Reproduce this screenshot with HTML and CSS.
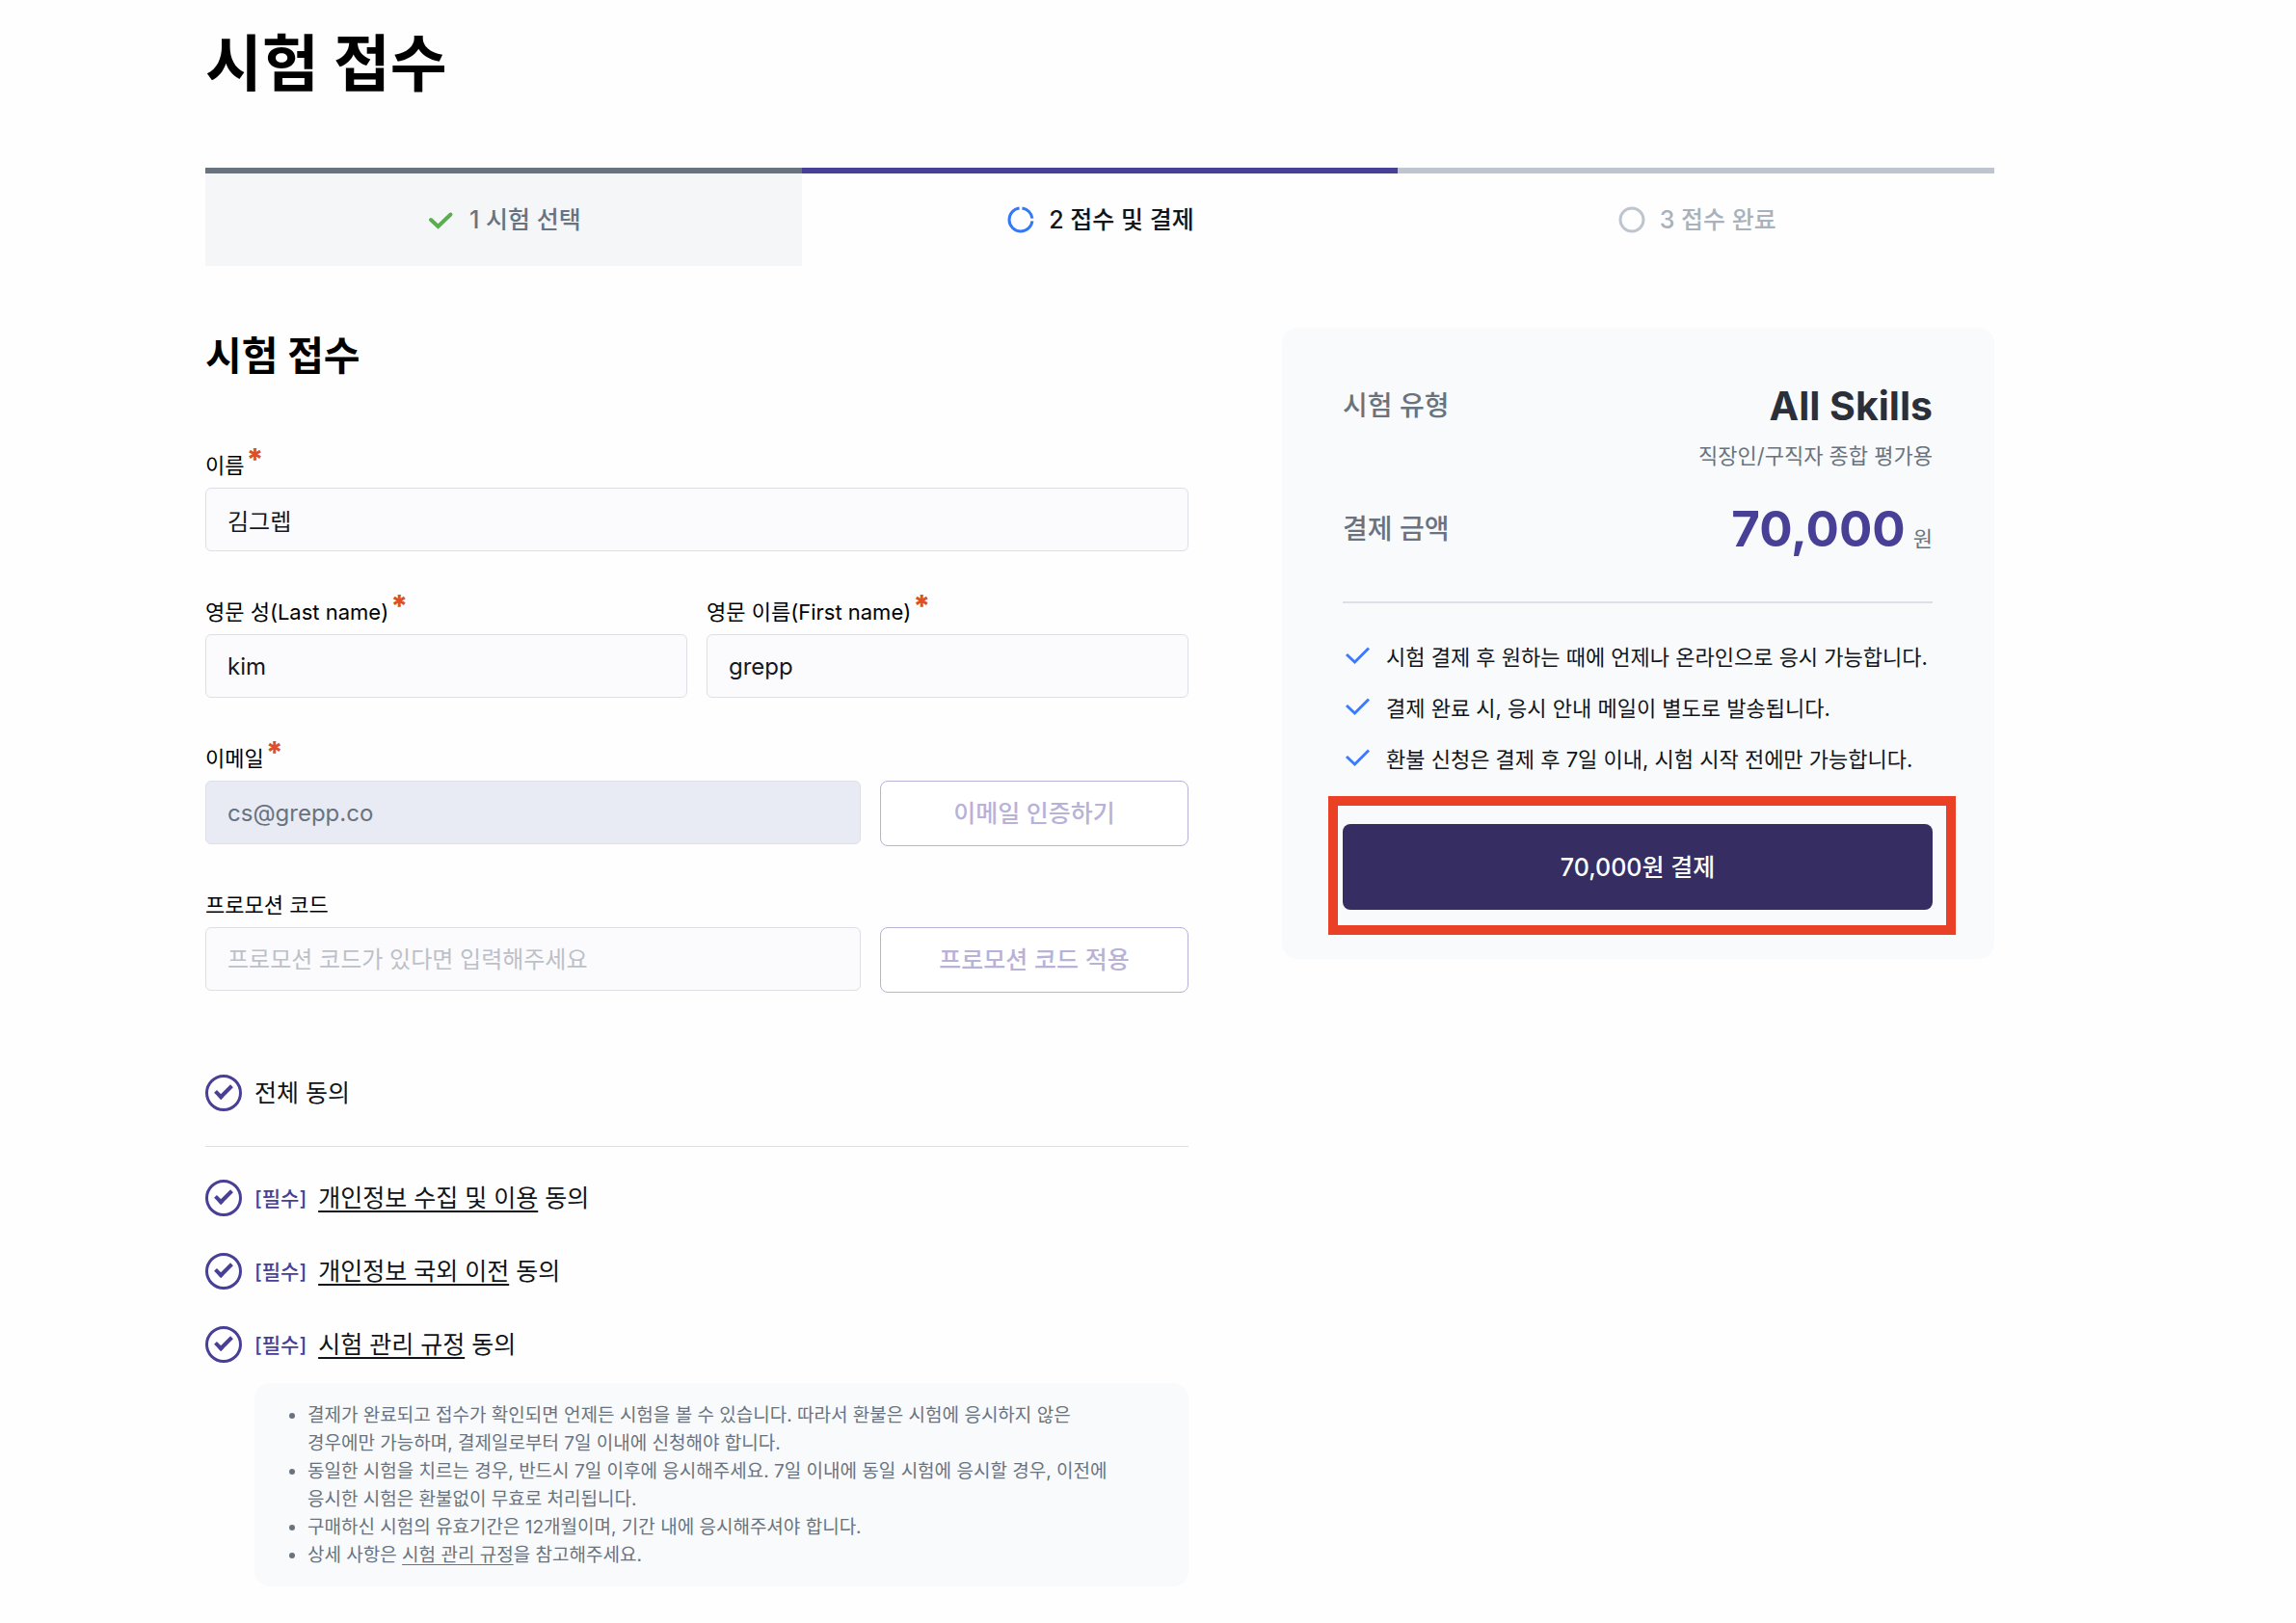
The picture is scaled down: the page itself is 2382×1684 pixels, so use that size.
FILE: index.html
```html
<!DOCTYPE html>
<html lang="ko">

<head>
    <meta charset="UTF-8">
    <meta name="viewport" content="width=device-width, initial-scale=1.0">
    <title>시험 접수</title>
    <link rel="stylesheet" href="styles.css">
</head>

<body>
    <div class="page">
        <h1>시험 접수</h1>

        <ol class="steps">
            <li class="step done">
                <svg class="step-icon" viewBox="0 0 32 32"><path d="M5 16l7.500 7L25.500 10.500" fill="none" stroke="#5aae4c" stroke-width="4" stroke-linecap="round" /></svg>
                <span>1 시험 선택</span>
            </li>
            <li class="step current">
                <svg class="step-icon" viewBox="0 0 32 32"><circle cx="16" cy="16" r="12" fill="none" stroke="#3478f6" stroke-width="3" pathLength="100" stroke-dasharray="71 4 21 4" stroke-dashoffset="-2" /></svg>
                <span>2 접수 및 결제</span>
            </li>
            <li class="step">
                <svg class="step-icon" viewBox="0 0 32 32"><circle cx="16" cy="16" r="12" fill="none" stroke="#bfc5ce" stroke-width="3" /></svg>
                <span>3 접수 완료</span>
            </li>
        </ol>

        <main class="content">
            <form class="form">
                <h2>시험 접수</h2>

                <div class="row">
                    <div class="field">
                        <label for="name">이름<span class="required">*</span></label>
                        <input id="name" type="text" value="김그렙">
                    </div>
                </div>

                <div class="row">
                    <div class="field">
                        <label for="last-name">영문 성(Last name)<span class="required">*</span></label>
                        <input id="last-name" type="text" value="kim">
                    </div>
                    <div class="field">
                        <label for="first-name">영문 이름(First name)<span class="required">*</span></label>
                        <input id="first-name" type="text" value="grepp">
                    </div>
                </div>

                <div class="row">
                    <div class="field">
                        <label for="email">이메일<span class="required">*</span></label>
                        <input id="email" type="email" value="cs@grepp.co" disabled>
                    </div>
                    <button class="sub-button" type="button" disabled>이메일 인증하기</button>
                </div>

                <div class="row">
                    <div class="field">
                        <label for="promotion">프로모션 코드</label>
                        <input id="promotion" type="text" placeholder="프로모션 코드가 있다면 입력해주세요">
                    </div>
                    <button class="sub-button" type="button" disabled>프로모션 코드 적용</button>
                </div>

                <div class="agree agree-all">
                    <input id="agree-all" type="checkbox" checked>
                    <label for="agree-all">전체 동의</label>
                </div>

                <div class="agree-list">
                    <div class="agree">
                        <input id="agree-privacy" type="checkbox" checked>
                        <label for="agree-privacy"><span class="must">[필수]</span><a href="#privacy">개인정보 수집 및 이용</a> 동의</label>
                    </div>
                    <div class="agree">
                        <input id="agree-overseas" type="checkbox" checked>
                        <label for="agree-overseas"><span class="must">[필수]</span><a href="#overseas">개인정보 국외 이전</a> 동의</label>
                    </div>
                    <div class="agree">
                        <input id="agree-rules" type="checkbox" checked>
                        <label for="agree-rules"><span class="must">[필수]</span><a href="#rules">시험 관리 규정</a> 동의</label>
                    </div>
                </div>

                <ul class="notice">
                    <li>결제가 완료되고 접수가 확인되면 언제든 시험을 볼 수 있습니다. 따라서 환불은 시험에 응시하지 않은 경우에만 가능하며, 결제일로부터 7일 이내에 신청해야 합니다.</li>
                    <li>동일한 시험을 치르는 경우, 반드시 7일 이후에 응시해주세요. 7일 이내에 동일 시험에 응시할 경우, 이전에 응시한 시험은 환불없이 무효로 처리됩니다.</li>
                    <li>구매하신 시험의 유효기간은 12개월이며, 기간 내에 응시해주셔야 합니다.</li>
                    <li>상세 사항은 <a href="#rules">시험 관리 규정</a>을 참고해주세요.</li>
                </ul>
            </form>

            <aside class="summary">
                <dl>
                    <div class="summary-row">
                        <dt>시험 유형</dt>
                        <dd>
                            <strong class="exam">All Skills</strong>
                            <span class="exam-desc">직장인/구직자 종합 평가용</span>
                        </dd>
                    </div>
                    <div class="summary-row">
                        <dt>결제 금액</dt>
                        <dd class="amount"><strong class="price">70,000</strong><span class="won">원</span></dd>
                    </div>
                </dl>

                <ul class="info">
                    <li><svg class="info-icon" viewBox="0 0 32 32"><path d="M4 15l8.500 8L27 8.500" fill="none" stroke="#3b7cff" stroke-width="3" /></svg>시험 결제 후 원하는 때에 언제나 온라인으로 응시 가능합니다.</li>
                    <li><svg class="info-icon" viewBox="0 0 32 32"><path d="M4 15l8.500 8L27 8.500" fill="none" stroke="#3b7cff" stroke-width="3" /></svg>결제 완료 시, 응시 안내 메일이 별도로 발송됩니다.</li>
                    <li><svg class="info-icon" viewBox="0 0 32 32"><path d="M4 15l8.500 8L27 8.500" fill="none" stroke="#3b7cff" stroke-width="3" /></svg>환불 신청은 결제 후 7일 이내, 시험 시작 전에만 가능합니다.</li>
                </ul>

                <div class="pay">
                    <button class="pay-button" type="button">70,000원 결제</button>
                    <div class="highlight"></div>
                </div>
            </aside>
        </main>
    </div>
</body>

</html>
```

FILE: styles.css
```css
*,
*::before {
    box-sizing: border-box;
}

body {
    margin: 0;
    background-color: #fefefe;
    color: #000;
    font-family: Inter, "Noto Sans CJK KR", sans-serif;
    word-break: keep-all;
}

h1,
h2,
ol,
ul,
dl,
dd {
    margin: 0;
    padding: 0;
}

ol,
ul {
    list-style: none;
}

input,
button {
    font-family: inherit;
}

.page {
    padding: 21px 313px 38px 213px;
}

h1 {
    font-size: 64px;
    line-height: 90px;
    margin-bottom: 63px;
}

h2 {
    font-size: 41px;
    line-height: 58px;
    margin-bottom: 70px;
}

/* 진행 단계 */
.steps {
    display: flex;
    margin-bottom: 64px;
}

.step {
    flex: 1;
    display: flex;
    align-items: center;
    justify-content: center;
    gap: 13px;
    height: 102px;
    border-top: 6px solid #bfc5ce;
    color: #a9b1bd;
    font-size: 25px;
    font-weight: 500;
}

.step span {
    padding-bottom: 4px;
}

.step.done {
    border-color: #69737f;
    background-color: #f4f6f8;
    color: #69737f;
}

.step.current {
    border-color: #483f96;
    color: #111418;
}

.step-icon {
    width: 32px;
    height: 32px;
}

.content {
    display: grid;
    grid-template-columns: 1020fr 739fr;
    align-items: start;
    gap: 97px;
}

.row {
    display: flex;
    align-items: flex-end;
    gap: 20px;
    margin-bottom: 48px;
}

.field {
    flex: 1;
    min-width: 0;
}

.field label {
    display: flex;
    height: 30px;
    margin-bottom: 8px;
    font-size: 22px;
    line-height: 30px;
}

.required {
    margin-left: 2px;
    color: #e04e26;
    font-size: 31px;
    font-weight: 800;
    line-height: 18px;
}

.field input {
    display: block;
    width: 100%;
    height: 66px;
    padding: 0 22px;
    border: 1px solid #dcdfe5;
    border-radius: 6px;
    background-color: #fbfbfd;
    color: #15181d;
    font-size: 24px;
}

.field input::placeholder {
    color: #bcc0c8;
}

.field input:disabled {
    background-color: #e8ebf3;
    color: #69737f;
}

.sub-button {
    width: 320px;
    height: 68px;
    margin-bottom: -2px;
    padding: 0 0 4px;
    border: 1px solid #b8b2d8;
    border-radius: 8px;
    background-color: #fff;
    color: #b8b2d8;
    font-size: 25px;
    font-weight: 500;
}

/* 약관 동의 */
.agree {
    display: flex;
    align-items: center;
    gap: 13px;
    height: 38px;
    color: #111418;
    font-size: 25px;
}

.agree input {
    appearance: none;
    flex: none;
    width: 38px;
    height: 38px;
    margin: 0;
    border: 3px solid #483f96;
    border-radius: 50%;
    display: grid;
    place-items: center;
}

.agree input:checked::before {
    content: "";
    width: 18px;
    height: 10px;
    margin-bottom: 6px;
    border: solid #483f96;
    border-width: 0 0 4px 4px;
    transform: rotate(-45deg);
}

.agree label {
    padding-bottom: 4px;
}

.agree-all {
    box-sizing: content-box;
    margin-top: 87px;
    padding-bottom: 36px;
    border-bottom: 1px solid #dddfe6;
}

.agree-list {
    display: grid;
    gap: 38px;
    margin-top: 34px;
}

.must {
    margin-right: 12px;
    color: #483f96;
    font-size: 21px;
    font-weight: 500;
    vertical-align: 1px;
}

.agree a {
    color: inherit;
    text-underline-offset: 4px;
    text-decoration-thickness: 2px;
}

.notice {
    margin: 21px 0 0 51px;
    padding: 19px 64px 18px 55px;
    border-radius: 16px;
    background-color: #f8fafc;
    color: #69737f;
    font-size: 19px;
    line-height: 29px;
    list-style: disc;
}

.notice a {
    color: inherit;
    text-underline-offset: 3px;
}

/* 결제 정보 */
.summary {
    padding: 54px 64px 51px 63px;
    border-radius: 16px;
    background-color: #f8fafc;
}

.summary dl {
    border-bottom: 2px solid #dddfe6;
    padding-bottom: 36px;
}

.summary-row {
    display: flex;
    justify-content: space-between;
    color: #69737f;
}

.summary-row + .summary-row {
    margin-top: 24px;
}

.summary dt {
    font-size: 28px;
    font-weight: 500;
    line-height: 54px;
}

.summary dd {
    text-align: right;
}

.exam {
    display: block;
    color: #2b2f3a;
    font-size: 41px;
    line-height: 54px;
}

.exam-desc {
    display: block;
    font-size: 22px;
    line-height: 50px;
}

.amount {
    line-height: 54px;
}

.price {
    color: #483f96;
    font-size: 51px;
}

.won {
    margin-left: 8px;
    font-size: 22px;
}

.info {
    padding: 27px 0 43px;
    color: #111418;
    font-size: 22px;
}

.info li {
    display: flex;
    align-items: center;
    gap: 13px;
    height: 53px;
    white-space: nowrap;
}

.info-icon {
    width: 32px;
    height: 32px;
}

.pay {
    position: relative;
}

.pay-button {
    display: block;
    width: 100%;
    height: 89px;
    padding: 0 0 3px;
    border: 0;
    border-radius: 8px;
    background-color: #362d62;
    color: #fff;
    font-size: 25px;
    font-weight: 500;
}

/* 결제 버튼 강조 테두리 */
.highlight {
    position: absolute;
    top: -29px;
    right: -24px;
    bottom: -26px;
    left: -15px;
    border: 10px solid #ea4025;
    pointer-events: none;
}
```
